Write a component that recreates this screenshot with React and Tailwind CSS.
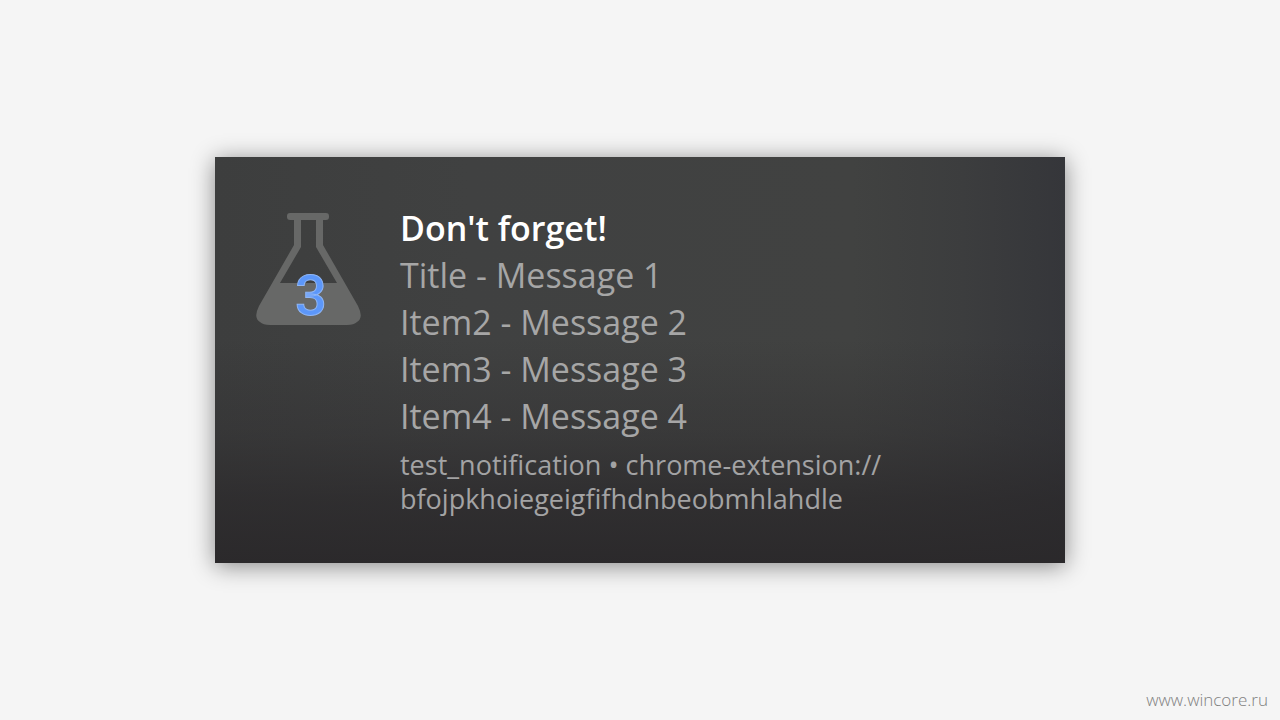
const MESSAGES = [
  { title: "Title", message: "Message 1" },
  { title: "Item2", message: "Message 2" },
  { title: "Item3", message: "Message 3" },
  { title: "Item4", message: "Message 4" },
];

function FlaskIcon({ count }) {
  return (
    <svg viewBox="0 0 108 124" className="w-27 shrink-0 overflow-visible" role="img" aria-label={`${count} experiments`}>
      <g fill="#676867">
        <rect x="32" y="2" width="42" height="7" rx="3" />
        <path
          fillRule="evenodd"
          d="M39 8H68V34L103 95Q109 107 102 111Q99 114 92 114H15Q8 114 5 111Q-2 107 4 95L39 34ZM46 8V36L25 72H82L61 36V8Z"
        />
      </g>
      <text
        x="56"
        y="104"
        textAnchor="middle"
        className="fill-[#5c97fa] stroke-[#8fb6f5] stroke-1 font-['Roboto',sans-serif] text-[56px] font-medium"
      >
        {count}
      </text>
    </svg>
  );
}

function Toast({ title, items, source, origin }) {
  return (
    <article className="flex w-full max-w-[850px] gap-[37px] bg-[#3e3f3f] bg-[linear-gradient(to_bottom,#2a282a00_45%,#2a282a55_68%,#2a282abb_84%,#2a282af2_100%),linear-gradient(to_right,#3d3e3e_0%,#404141_30%,#414241_75%,#3c3d3e_88%,#35363a_100%)] px-10 pt-12 pb-[47px] shadow-[0_3px_22px_rgba(0,0,0,0.45)]">
      <div className="pt-1.5">
        <FlaskIcon count={3} />
      </div>
      <div className="min-w-0 flex-1">
        <h1 className="text-[34px] leading-[47px] font-semibold text-white">{title}</h1>
        <ul className="text-[34px] leading-[47px] text-[#a6a6a6]">
          {items.map((item) => (
            <li key={item.message}>
              {item.title} - {item.message}
            </li>
          ))}
        </ul>
        <p className="mt-2 text-[27px] leading-[34px] text-[#a3a3a4]">
          {source} • chrome-extension://
          <br />
          {origin}
        </p>
      </div>
    </article>
  );
}

export default function App() {
  return (
    <div className="grid min-h-screen grid-rows-[1fr_auto_1fr] bg-[#f5f5f5] font-['Open_Sans','Noto_Sans',sans-serif]">
      <main className="row-start-2 flex justify-center">
        <Toast
          title="Don't forget!"
          items={MESSAGES}
          source="test_notification"
          origin="bfojpkhoiegeigfifhdnbeobmhlahdle"
        />
      </main>
      <footer className="row-start-3 flex items-end justify-end px-3 pb-2">
        <a href="http://www.wincore.ru" className="text-[17px] leading-6 font-light text-[#808080]">
          www.wincore.ru
        </a>
      </footer>
    </div>
  );
}
